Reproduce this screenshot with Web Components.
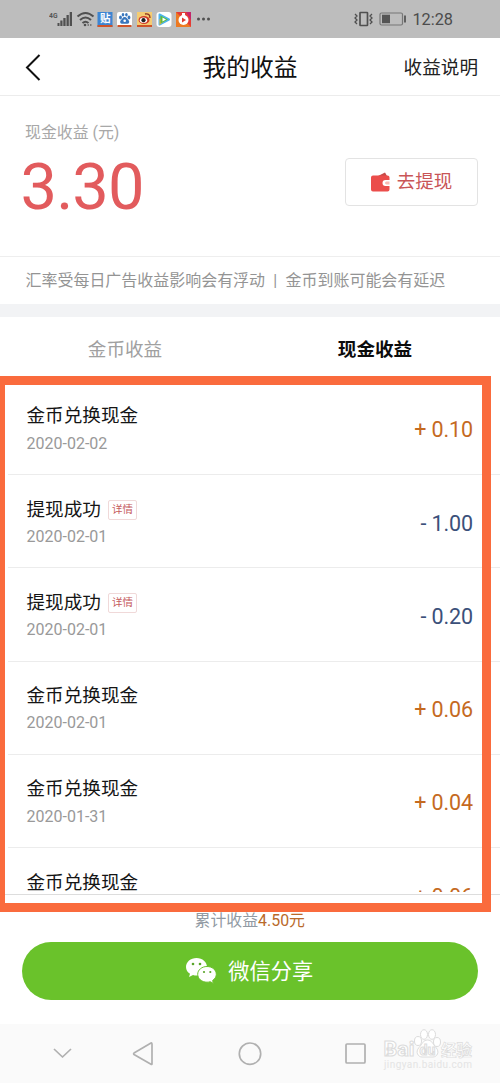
<!DOCTYPE html>
<html lang="zh-CN">
<head>
<meta charset="utf-8">
<title>我的收益</title>
<style>
html,body{margin:0;padding:0;background:#fff}
body{font-family:Roboto,"Noto Sans CJK SC",sans-serif;width:500px;height:1083px;overflow:hidden;color:#111}
</style>
</head>
<body>
<earnings-app></earnings-app>
<script>
const define = (name, html) => customElements.define(name, class extends HTMLElement {
  constructor() {
    super();
    const t = document.createElement('template');
    t.innerHTML = html;
    this.attachShadow({ mode: 'open' }).appendChild(t.content.cloneNode(true));
  }
});

define('status-bar', `
<style>
:host{display:flex;height:38px;box-sizing:border-box;background:#bdbdbd;align-items:center;justify-content:space-between;padding:0 47px 0 49px;color:#4c4c4c}
svg{display:block}
.right{display:flex;align-items:center;gap:6px;font-size:16.300px;line-height:20px}
.right span{padding-top:2px}
</style>
<svg width="164" height="38" viewBox="0 0 164 38">
  <text x="0" y="17.500" font-size="8" font-weight="700" fill="#555" textLength="8.500" lengthAdjust="spacingAndGlyphs">4G</text>
  <g fill="#505050"><rect x="8.500" y="23" width="2" height="3"/><rect x="11.300" y="20.500" width="2.200" height="5.500"/><rect x="14.300" y="18" width="2.300" height="8"/><rect x="17.500" y="15" width="2.300" height="11"/><rect x="20.700" y="12" width="2.300" height="14"/></g>
  <g fill="none" stroke="#505050" stroke-width="2"><path d="M28.500 16.500Q36.500 9.500 44.500 16.500M31 20Q36.500 15 42 20M33.500 23Q36.500 20.500 39.500 23"/></g>
  <circle cx="36" cy="25" r="1.300" fill="#505050"/><path d="M38.500 25h4" stroke="#666" stroke-width="1.500" stroke-dasharray="1.500 1"/>
  <rect x="48.500" y="12" width="15" height="15" fill="#3d85d2"/><text x="51" y="22" font-size="10.500" font-weight="700" fill="#fff">贴</text><path d="M48.500 25h15v2h-15z" fill="#cf5329"/>
  <rect x="68" y="12" width="15" height="15" rx="2" fill="#fff"/><g fill="#3976bd"><ellipse cx="71.500" cy="17.500" rx="1.400" ry="1.900"/><ellipse cx="74" cy="14.800" rx="1.300" ry="1.800"/><ellipse cx="77.400" cy="14.800" rx="1.300" ry="1.800"/><ellipse cx="80" cy="17.500" rx="1.400" ry="1.900"/><path d="M75.700 17c2 0 2.500 2 3.900 3.300 1.300 1.300.6 3.700-1.400 3.500h-5c-2 .2-2.700-2.200-1.400-3.500 1.400-1.300 1.900-3.300 3.900-3.300"/></g><path d="M68.500 25h14v2h-14z" fill="#cf5329"/><circle cx="75.700" cy="20.800" r="1.300" fill="#fff"/>
  <rect x="88" y="12" width="15" height="15" fill="#f5cc72"/><ellipse cx="95" cy="20" rx="5.500" ry="4" fill="#cf3b27"/><ellipse cx="94.500" cy="20.200" rx="3.700" ry="2.600" fill="#fff"/><circle cx="94.500" cy="20.200" r="2.100" fill="#222"/><path d="M96 14q5-1 5 4" fill="none" stroke="#8c3120" stroke-width="1.300"/><path d="M88 25h15v2h-15z" fill="#cf5329"/>
  <rect x="107.500" y="12" width="15" height="15" rx="3" fill="#fff"/><path d="M110.500 14.500l9.500 5-9.500 5z" fill="#4db4ed" stroke="#4db4ed" stroke-width="2" stroke-linejoin="round"/><path d="M110.500 19l6 1-6 5z" fill="#f7b52c"/><path d="M111.500 15.500l7.500 4-7.500 4z" fill="#5ebc3c"/><path d="M113.500 17.500l3.500 2-3.500 2z" fill="#fff"/>
  <rect x="127" y="12" width="15" height="15" fill="#e43b37"/><path d="M127 12v15h15z" fill="#ed7a22"/><path d="M137 12h5v8z" fill="#c4256b"/><circle cx="134.500" cy="20" r="5" fill="#fff"/><path d="M133 13h3v4h-3z" fill="#fff"/><path d="M133 17.500l4 2.500-4 2.500z" fill="#df3d30"/>
  <g fill="#505050"><circle cx="149.500" cy="19" r="1.500"/><circle cx="154.500" cy="19" r="1.500"/><circle cx="159.500" cy="19" r="1.500"/></g>
</svg>
<div class="right">
<svg width="52" height="38" viewBox="355 0 52 38" fill="none" stroke="#505050"><rect x="361" y="12.500" width="7.500" height="13" rx=".5" stroke-width="1.700"/><path d="M356 14l2 2-2 2 2 2-2 2 2 2M373 14l-2 2 2 2-2 2 2 2-2 2" stroke-width="1.300"/><rect x="381" y="13" width="22.500" height="12" rx="1.500" stroke="#777" stroke-width="1.200"/><rect x="383" y="14.700" width="8" height="8.500" fill="#555" stroke="none"/><path d="M406 15.500v7" stroke-width="1.700"/></svg>
<span>12:28</span></div>`);

define('page-header', `
<style>
:host{display:grid;grid-template-columns:1fr auto 1fr;height:58px;box-sizing:border-box;align-items:center;border-bottom:1.500px solid #ececec;padding:2px 22px 0;font-size:23.700px;color:#111;line-height:34px}
svg{display:block;margin-left:2px}.link{font-size:18.600px;text-align:right;color:#222}
</style>
<svg width="20" height="30" viewBox="0 0 20 30" fill="none" stroke="#111" stroke-width="2"><path d="M15.500 2L3 14.500 15.500 27"/></svg>
<span><slot></slot></span><span class="link"><slot name="action"></slot></span>`);

define('cash-summary', `
<style>
:host{display:flex;height:161px;box-sizing:border-box;border-bottom:1px solid #eee;justify-content:space-between;padding:25px 22px 0}
.label{font-size:15.900px;line-height:24px;color:#a8a8a8;padding-left:3px}
.amount{font-size:65px;line-height:80px;color:#e25b5d;margin-top:2px;letter-spacing:-.9px;margin-left:-1.500px}
.btn{display:flex;box-sizing:border-box;width:133px;height:48px;margin-top:37px;border:1.500px solid #e3e3e3;border-radius:4px;align-items:center;justify-content:center;gap:7px;font-size:18.500px;line-height:28px;color:#c95557}
</style>
<div><div class="label">现金收益 (元)</div><div class="amount">3.30</div></div>
<div class="btn"><svg width="19" height="20" viewBox="0 0 19 20"><path d="M7 4l7-3.500L16 4z" fill="#c64b49"/><path d="M2 3.500h14.500q2 0 2 2V8h-4q-3 .2-3 3t3 3h4v3.500q0 2-2 2H2q-2 0-2-2v-12q0-2 2-2" fill="#eb4d4b"/><path d="M18.500 9.500h-3q-1.500.2-1.500 1.500t1.500 1.500h3z" fill="#f9b9b4"/></svg><span>去提现</span></div>`);

define('rate-notice', `
<style>:host{display:flex;height:60px;box-sizing:border-box;border-bottom:13px solid #f2f3f5;padding:0 25.500px;align-items:center;font-size:15.970px;line-height:24px;color:#949494;white-space:pre}i{font-style:normal;width:20.500px;text-align:center}</style>
<span>汇率受每日广告收益影响会有浮动</span><i>|</i><span>金币到账可能会有延迟</span>`);

define('income-tabs', `
<style>:host{display:grid;grid-template-columns:1fr 1fr;height:64px;box-sizing:border-box;padding-top:2px;align-items:center;text-align:center;font-size:18.600px;line-height:28px;color:#a0a0a0}b{font-weight:700;color:#0c0c0c}</style>
<span>金币收益</span><b>现金收益</b>`);

define('income-row', `
<style>
:host{display:flex;flex:0 0 93.300px;box-sizing:border-box;border-bottom:1px solid #ececec;margin-left:8px;padding:20.500px 27px 0 18.500px;justify-content:space-between;--tone:#c56a1f}
:host([out]){--tone:#3b507a}
.title{display:flex;align-items:center;gap:7px;font-size:18.600px;line-height:28px;color:#151515}
.date{font-size:16px;line-height:22px;margin-top:2.300px;color:#999}
.value{font-size:21.500px;line-height:30px;margin-top:13px;color:var(--tone);letter-spacing:-.1px}
</style>
<div><div class="title"><slot name="title"></slot><slot name="tag"></slot></div><div class="date"><slot name="date"></slot></div></div>
<div class="value"><slot></slot></div>`);

define('detail-tag', `
<style>:host{display:block;box-sizing:border-box;width:29px;height:20px;border:1.500px solid #f0d9d9;border-radius:2px;text-align:center;font-size:10.500px;line-height:18px;color:#c55a5c}</style><slot></slot>`);

define('income-list', `
<style>:host{display:flex;flex-direction:column;height:514px;box-sizing:border-box;border-bottom:1px solid #ddd;padding:.8px 0 2px}div{display:flex;flex-direction:column;flex:1;min-height:0;overflow:hidden}</style>
<div><slot></slot></div>`);

define('share-footer', `
<style>
:host{display:flex;flex-direction:column;height:129px;box-sizing:border-box;padding:14px 22px 0 21.500px}
.total{text-align:center;font-size:15.900px;line-height:24px;color:#919aa3}.total b{font-weight:400;color:#b96a2b}
.share{display:flex;align-items:center;justify-content:center;gap:11px;height:58px;margin-top:9px;border-radius:29px;background:#6ac22b;color:#fff;font-size:21.200px;line-height:32px}
.share span{padding-top:2px}
</style>
<div class="total">累计收益<b>4.50元</b></div>
<div class="share"><svg width="31" height="26" viewBox="0 0 31 26"><path d="M10.500 0C4.700 0 0 3.900 0 9c0 2.900 1.500 5.200 4 6.800L3 19l4-1.900q1.700.5 3.500.5C16.500 17.600 21 14 21 9S16.500 0 10.500 0" fill="#fff"/><path d="M21 8.500c-5.200 0-9.300 3.400-9.300 7.800s4.100 7.900 9.300 7.900q1.700 0 3.200-.5l3.300 1.700-.9-2.900c2.200-1.500 3.700-3.600 3.700-6.200 0-4.400-4.100-7.800-9.300-7.800" fill="#fff" stroke="#6ac22b" stroke-width="1"/><g fill="#5aa52a"><circle cx="7" cy="6" r="1.300"/><circle cx="14" cy="6" r="1.300"/><circle cx="18" cy="14" r="1.100"/><circle cx="24.300" cy="14" r="1.100"/></g></svg><span>微信分享</span></div>`);

define('nav-bar', `
<style>:host{display:block;height:59px;background:#fafafa}svg{display:block}</style>
<svg width="500" height="59" viewBox="0 1024 500 59" fill="none" stroke="#b0b0b0" stroke-width="1.700"><path d="M54 1049l8.500 8 8.500-8M152 1043.500v20.500q-.2.800-1 .3l-17-9.800q-.8-.7 0-1.400l17-10q.8-.4 1 .4" stroke-linejoin="round"/><circle cx="250" cy="1053.700" r="10.700"/><rect x="346" y="1044" width="19" height="19" rx="1"/>
<g fill="#fff" stroke="#dcdcdc" stroke-width="1"><ellipse cx="418" cy="1041" rx="3.500" ry="4.500"/><ellipse cx="424" cy="1034.500" rx="3.500" ry="4.800"/><ellipse cx="432" cy="1034.500" rx="3.500" ry="4.800"/><ellipse cx="437" cy="1042" rx="3.500" ry="4.500"/><path d="M427.500 1040c4.500 0 5 4 8.500 7.500 4 4.500 1 9.500-3 9.500h-11c-4 0-7-5-3-9.500 3.500-3.500 4-7.500 8.500-7.500"/>
<g font-weight="700"><text x="383.500" y="1056" font-size="20" textLength="31" lengthAdjust="spacingAndGlyphs">Bai</text><text x="419.500" y="1055" font-size="14">du</text><text x="441" y="1055.500" font-size="15.500" stroke-width=".7" textLength="31">经验</text></g></g><text x="384" y="1068" font-size="10" fill="#e4e4e4" stroke="none" textLength="88">jingyan.baidu.com</text></svg>`);

define('focus-frame', `
<style>:host{display:block;position:absolute;left:0;top:375.500px;width:491px;height:536.500px;box-sizing:border-box;border:solid #fa6b3d;border-width:9px 9px 9px 5px}</style>`);

define('earnings-app', `
<style>:host{display:flex;flex-direction:column;position:relative;width:500px;height:1083px;overflow:hidden;background:#fff}status-bar,page-header,cash-summary,rate-notice,income-tabs,income-list,share-footer,nav-bar{flex-shrink:0}</style>
<status-bar></status-bar>
<page-header>我的收益<span slot="action">收益说明</span></page-header>
<cash-summary></cash-summary>
<rate-notice></rate-notice>
<income-tabs></income-tabs>
<income-list>
<income-row><span slot="title">金币兑换现金</span><span slot="date">2020-02-02</span>+ 0.10</income-row>
<income-row out><span slot="title">提现成功</span><detail-tag slot="tag">详情</detail-tag><span slot="date">2020-02-01</span>- 1.00</income-row>
<income-row out><span slot="title">提现成功</span><detail-tag slot="tag">详情</detail-tag><span slot="date">2020-02-01</span>- 0.20</income-row>
<income-row><span slot="title">金币兑换现金</span><span slot="date">2020-02-01</span>+ 0.06</income-row>
<income-row><span slot="title">金币兑换现金</span><span slot="date">2020-01-31</span>+ 0.04</income-row>
<income-row><span slot="title">金币兑换现金</span>+ 0.06</income-row>
</income-list>
<share-footer></share-footer>
<nav-bar></nav-bar>
<focus-frame></focus-frame>`);
</script>
</body>
</html>
